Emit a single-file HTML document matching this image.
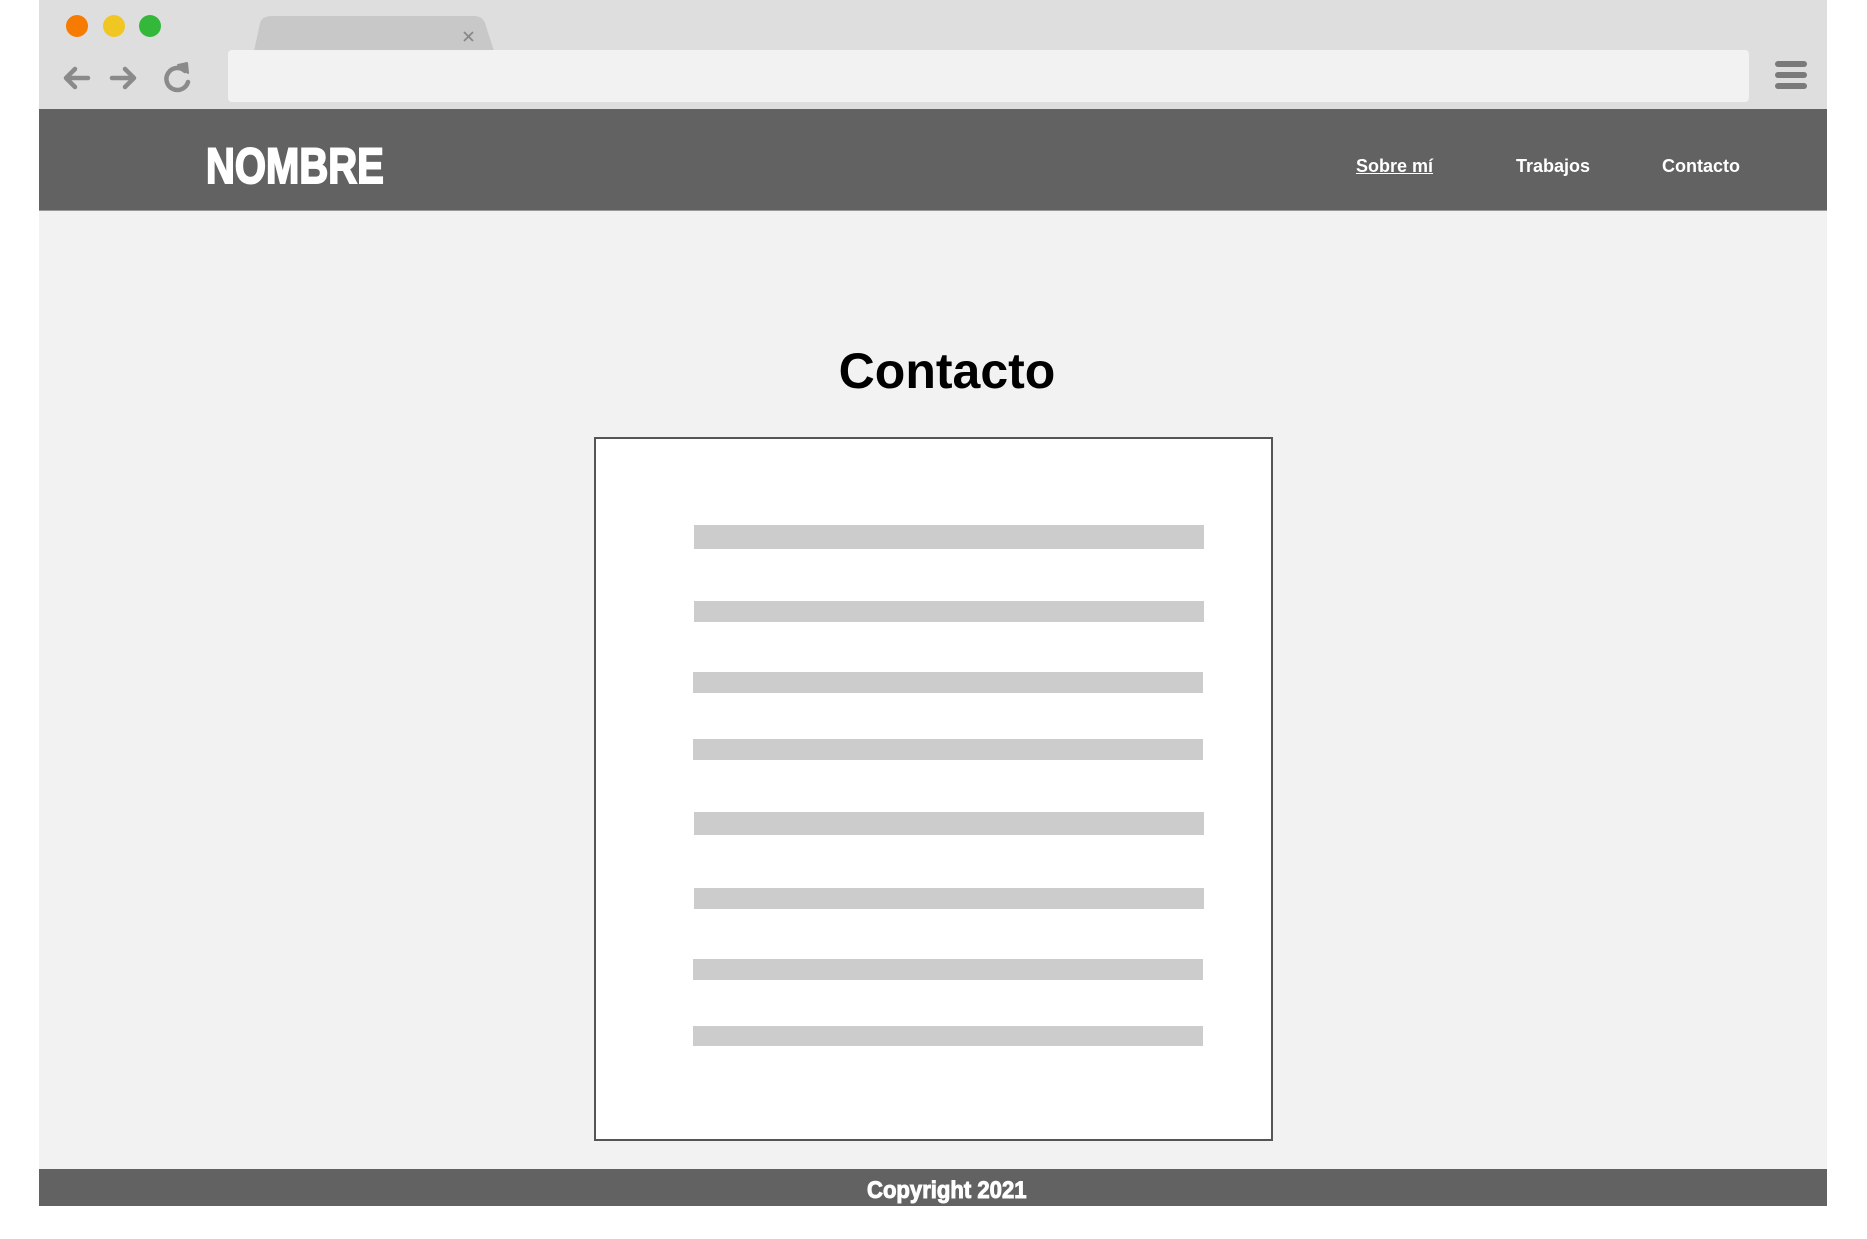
<!DOCTYPE html>
<html><head><meta charset="utf-8"><style>
*{margin:0;padding:0;box-sizing:border-box}
body{width:1867px;height:1239px;background:#fff;position:relative;overflow:hidden;font-family:"Liberation Sans",Arial,sans-serif}
.a{position:absolute}
.dot{position:absolute;width:22px;height:22px;border-radius:50%;top:15px}
.bar{position:absolute;background:#cccccc;left:694px;width:510px}
.nav{position:absolute;top:155px;color:#fff;font-weight:bold;font-size:18px;line-height:22px}
</style></head><body>
<div class="a" style="left:39px;top:0;width:1788px;height:109px;background:#dedede"></div>
<div class="dot" style="left:66px;background:#f77b00"></div>
<div class="dot" style="left:103px;background:#efc622"></div>
<div class="dot" style="left:139px;background:#33b83a"></div>
<svg class="a" style="left:246px;top:15px" width="254" height="36"><path d="M8 36 L14 8 Q16 1 26 1 L228 1 Q236 1 239 8 L248 36 Z" fill="#c8c8c8"/><path d="M218 22 L227 31 M227 22 L218 31" stroke="#888" stroke-width="1.8" transform="translate(0,-5)"/></svg>
<div class="a" style="left:228px;top:50px;width:1521px;height:52px;background:#f2f2f2;border-radius:4px"></div>
<svg class="a" style="left:60px;top:60px" width="140" height="36" fill="none" stroke="#8a8a8a" stroke-width="4.5" stroke-linecap="round" stroke-linejoin="round">
<path d="M6 18 H28 M15 9 L6 18 L15 27"/>
<path d="M52 18 H74 M65 9 L74 18 L65 27"/>
<path d="M125 11 A11 11 0 1 0 128 22"/>
<path d="M118 5 L127 3 L128 13 Z" fill="#8a8a8a" stroke-width="2"/>
</svg>
<div class="a" style="left:1775px;top:61px;width:32px;height:6px;border-radius:3px;background:#7a7a7a"></div>
<div class="a" style="left:1775px;top:72px;width:32px;height:6px;border-radius:3px;background:#7a7a7a"></div>
<div class="a" style="left:1775px;top:83px;width:32px;height:6px;border-radius:3px;background:#7a7a7a"></div>
<div class="a" style="left:39px;top:109px;width:1788px;height:102px;background:#626262;border-bottom:1px solid #999"></div>
<div class="a" style="left:206px;top:136px;font-size:50px;font-weight:bold;color:#fff;line-height:60px;transform:scaleX(0.8);transform-origin:0 0;-webkit-text-stroke:2px #fff">NOMBRE</div>
<div class="nav" style="left:1356px;text-decoration:underline">Sobre mí</div>
<div class="nav" style="left:1516px">Trabajos</div>
<div class="nav" style="left:1662px">Contacto</div>
<div class="a" style="left:39px;top:211px;width:1788px;height:958px;background:#f2f2f2"></div>
<div class="a" style="left:0;width:1867px;top:341px;text-align:center;padding-left:27px;font-size:50px;font-weight:bold;color:#000;line-height:60px">Contacto</div>
<div class="a" style="left:594px;top:437px;width:679px;height:704px;background:#fff;border:2px solid #555"></div>
<div class="bar" style="top:525px;height:24px"></div>
<div class="bar" style="top:601px;height:21px"></div>
<div class="bar" style="top:672px;height:21px;left:693px"></div>
<div class="bar" style="top:739px;height:21px;left:693px"></div>
<div class="bar" style="top:812px;height:23px"></div>
<div class="bar" style="top:888px;height:21px"></div>
<div class="bar" style="top:959px;height:21px;left:693px"></div>
<div class="bar" style="top:1026px;height:20px;left:693px"></div>
<div class="a" style="left:39px;top:1169px;width:1788px;height:37px;background:#626262"></div>
<div class="a" style="left:867px;top:1176px;font-size:24px;font-weight:bold;color:#fff;line-height:30px;transform:scaleX(0.92);transform-origin:0 0;white-space:nowrap;-webkit-text-stroke:1px #fff">Copyright 2021</div>
<div class="a" style="left:0;top:1206px;width:1867px;height:33px;background:#fff"></div>
</body></html>
